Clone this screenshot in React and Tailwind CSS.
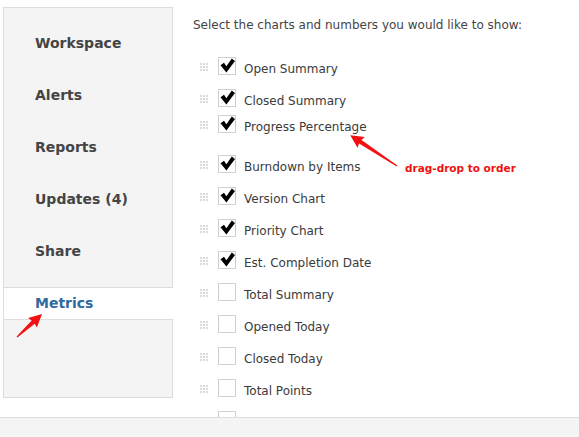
import React from "react";

const rows = [
  { label: "Open Summary", checked: true, h: "h-[32px]" },
  { label: "Closed Summary", checked: true, h: "h-[26px]" },
  { label: "Progress Percentage", checked: true, h: "h-[40px]" },
  { label: "Burndown by Items", checked: true, h: "h-[32px]" },
  { label: "Version Chart", checked: true, h: "h-[32px]" },
  { label: "Priority Chart", checked: true, h: "h-[32px]" },
  { label: "Est. Completion Date", checked: true, h: "h-[32px]" },
  { label: "Total Summary", checked: false, h: "h-[32px]" },
  { label: "Opened Today", checked: false, h: "h-[32px]" },
  { label: "Closed Today", checked: false, h: "h-[32px]" },
  { label: "Total Points", checked: false, h: "h-[32px]" },
  { label: "", checked: false, h: "h-[32px]" },
];

const navItems = ["Workspace", "Alerts", "Reports", "Updates (4)", "Share"];

function Handle() {
  return (
    <div className="mt-[6px] ml-[7px] grid grid-cols-3 gap-[1px] w-[8px]">
      {Array.from({ length: 9 }).map((_, i) => (
        <div key={i} className="w-[2px] h-[2px] bg-[#dcdcdc]" />
      ))}
    </div>
  );
}

function Checkbox({ checked }) {
  return (
    <div className="ml-[10px] w-[18px] h-[18px] border border-[#cfcfcf] bg-white shrink-0 relative">
      {checked && (
        <svg width="18" height="18" viewBox="0 0 18 18" className="absolute -left-px -top-px">
          <polygon points="2.5,8.3 6,5.8 8.4,9.3 13.8,1.6 17,4 8.4,15.6" fill="#000" />
        </svg>
      )}
    </div>
  );
}

function Arrow({ x, y, angle, len }) {
  const L = len;
  const d = `M0,-0.6 L${L - 12},-2.2 L${L - 13},-6.5 L${L},0 L${L - 13},6.5 L${L - 12},2.2 L0,0.6 Z`;
  return <path d={d} fill="#f21010" transform={`translate(${x} ${y}) rotate(${angle})`} />;
}

export default function App() {
  return (
    <div
      className="relative w-[579px] h-[437px] overflow-hidden bg-white"
      style={{ fontFamily: '"DejaVu Sans", Verdana, sans-serif' }}
    >
      <div className="flex h-[417px] overflow-hidden pt-[7px] pl-[3px]">
        {/* Sidebar */}
        <div className="w-[170px] shrink-0 flex flex-col">
          <div className="bg-[#f4f4f4] border border-[#dddddd] pt-[9px] pb-[10px]">
            {navItems.map((n) => (
              <div
                key={n}
                className="h-[52px] flex items-center pl-[31px] text-[14px] font-bold text-[#444444]"
              >
                {n}
              </div>
            ))}
          </div>
          <div className="h-[31px] border-l border-[#dddddd] bg-white flex items-center pl-[31px] text-[14px] font-bold text-[#2f6aa0]">
            Metrics
          </div>
          <div className="h-[79px] bg-[#f4f4f4] border border-[#dddddd]" />
        </div>

        {/* Content */}
        <div className="ml-[20px] pt-[10px] flex flex-col">
          <div className="text-[12px] leading-[16px] text-[#444444] mb-[24px]">
            Select the charts and numbers you would like to show:
          </div>
          {rows.map((r, i) => (
            <div key={i} className={`${r.h} shrink-0 flex items-start`}>
              <Handle />
              <Checkbox checked={r.checked} />
              {r.label && (
                <div className="ml-[8px] mt-[4px] text-[12px] leading-[16px] text-[#3a3a3a] whitespace-nowrap">
                  {r.label}
                </div>
              )}
            </div>
          ))}
        </div>
      </div>

      {/* Footer */}
      <div className="h-[20px] bg-[#f4f4f4] border-t border-[#dddddd]" />

      {/* Annotations */}
      <svg className="absolute inset-0 pointer-events-none" width="579" height="437">
        <Arrow x={397} y={166} angle={213.4} len={56} />
        <Arrow x={17} y={337} angle={-42.6} len={34} />
      </svg>
      <div className="absolute left-[405px] top-[160px] text-[10.5px] leading-[16px] font-bold text-[#f21010] whitespace-nowrap">
        drag-drop to order
      </div>
    </div>
  );
}
